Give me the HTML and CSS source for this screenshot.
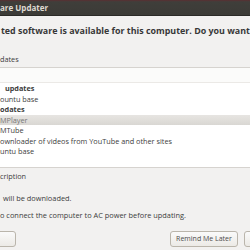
FILE: index.html
```html
<!DOCTYPE html>
<html>
<head>
<meta charset="utf-8">
<link rel="stylesheet" href="styles.css">
</head>
<body>
<div class="window">
  <div class="titlebar"><span class="title">are Updater</span></div>
  <div class="content">
    <div class="headline">ted software is available for this computer. Do you want to install it now?</div>
    <div class="label">dates</div>
    <div class="list">
      <div class="row blank"></div>
      <div class="row header ind1">&nbsp;updates</div>
      <div class="row">ountu base</div>
      <div class="row header">odates</div>
      <div class="row selected">MPlayer</div>
      <div class="row">MTube</div>
      <div class="row">ownloader of videos from YouTube and other sites</div>
      <div class="row">untu base</div>
    </div>
    <div class="expander">cription</div>
    <div class="info">
      <div class="line1">&nbsp;will be downloaded.</div>
      <div class="line2">o connect the computer to AC power before updating.</div>
    </div>
    <div class="buttons">
      <div class="btn left"></div>
      <div class="spacer"></div>
      <div class="btn remind">Remind Me Later</div>
      <div class="btn right"></div>
    </div>
  </div>
</div>
</body>
</html>
```
FILE: styles.css
```css
html, body {
  margin: 0;
  padding: 0;
  width: 250px;
  height: 250px;
  overflow: hidden;
  background: #f2f1f0;
}
.window {
  width: 250px;
  height: 250px;
  overflow: hidden;
  font-family: "Open Sans", "DejaVu Sans", sans-serif;
  color: #3c3c3c;
}
.titlebar {
  height: 15px;
  background: linear-gradient(#5b2c2f 0, #4a3a39 1px, #3f3e3a 2px, #3c3b37 100%);
  display: flex;
  align-items: center;
  border-bottom: 1px solid #2b2a27;
}
.title {
  color: #dfdbd2;
  font-size: 8px;
  font-weight: 700;
  white-space: nowrap;
}
.content {
  display: flex;
  flex-direction: column;
}
.headline {
  font-size: 8.9px;
  font-weight: 700;
  white-space: nowrap;
  margin-top: 8px;
  margin-left: 1px;
  height: 13px;
  line-height: 13px;
  color: #383838;
}
.label {
  font-size: 7.3px;
  margin-top: 17px;
  height: 10px;
  line-height: 10px;
}
.list {
  margin-top: 3px;
  background: #fff;
  border-top: 1px solid #d6d3cf;
  border-bottom: 1px solid #d6d3cf;
  height: 99px;
  font-size: 7.3px;
}
.row {
  height: 10.5px;
  line-height: 10.5px;
  white-space: nowrap;
}
.row.blank {
  height: 14px;
  background: #fbfbfa;
  border-bottom: 1px solid #ebe9e6;
}
.row.header {
  font-weight: 700;
}
.row.ind1 {
  padding-left: 3px;
}
.row.selected {
  background: linear-gradient(#e7e5e2, #d9d7d3);
  color: #777;
}
.expander {
  font-size: 7.3px;
  margin-top: 3px;
  height: 10px;
  line-height: 10px;
}
.info {
  font-size: 7.4px;
  margin-top: 12px;
}
.line1 {
  height: 10px;
  line-height: 10px;
  margin-left: 1px;
}
.line2 {
  margin-top: 7px;
  height: 10px;
  line-height: 10px;
}
.buttons {
  display: flex;
  margin-top: 11px;
  height: 16px;
}
.btn {
  border: 1px solid #bab5ab;
  border-radius: 3px;
  background: linear-gradient(#fafafa, #eceae6);
  font-size: 7px;
  line-height: 14px;
  text-align: center;
  box-sizing: border-box;
}
.btn.left {
  width: 19px;
  margin-left: -3px;
}
.spacer { flex: 1; }
.btn.remind {
  width: 68px;
  color: #4c4c4c;
}
.btn.right {
  width: 20px;
  margin-left: 6px;
  margin-right: -14px;
}
```
